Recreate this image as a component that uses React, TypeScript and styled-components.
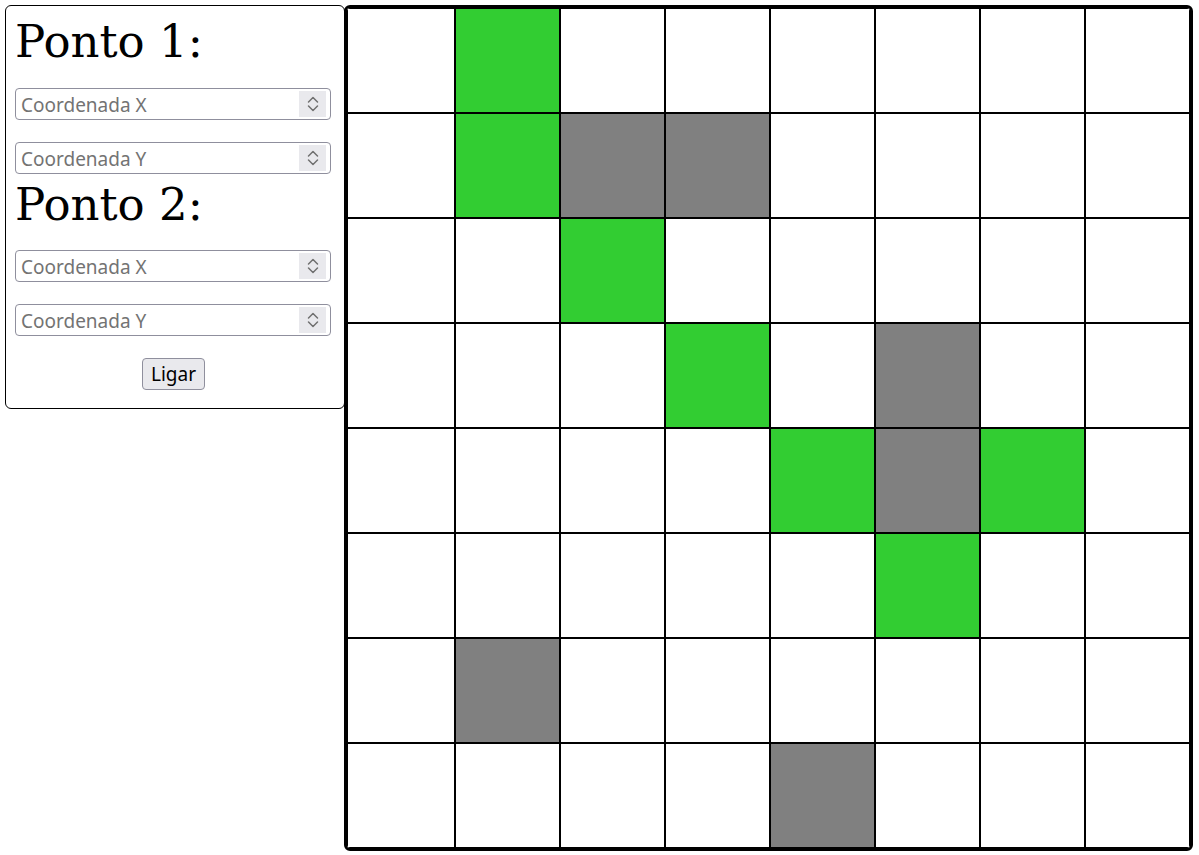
import styled, { createGlobalStyle } from 'styled-components';
import { useState } from 'react';

const GlobalStyle = createGlobalStyle`
    body {
        margin: 0;
        background: #fff;
        font-family: "DejaVu Serif", serif;
    }
`;

const Page = styled.div`
    display: flex;
    align-items: flex-start;
    padding: 5px;
    `;

const Panel = styled.form`
    width: 340px;
    box-sizing: border-box;
    border: 1px solid #000;
    border-radius: 6px;
    padding: 10px 12px 18px 9px;
    display: flex;
    flex-direction: column;
    `;

const Title = styled.h1<{ $gap: number }>`
    margin: ${p => p.$gap}px 0 0 0;
    font-family: "DejaVu Serif", serif;
    font-weight: 400;
    font-size: 45px;
    line-height: 52px;
    height: 52px;
    color: #000;
    `;

const Field = styled.label<{ $gap: number }>`
    margin-top: ${p => p.$gap}px;
    width: 316px;
    height: 32px;
    box-sizing: border-box;
    border: 1px solid #8f8f9d;
    border-radius: 4px;
    display: flex;
    align-items: center;
    padding: 2px 4px 2px 5px;
    background: #fff;
    `;

const Input = styled.input`
    flex: 1;
    min-width: 0;
    border: none;
    outline: none;
    padding: 2px 0 0 0;
    font-family: "Noto Sans", sans-serif;
    font-size: 19px;
    color: #000;
    background: transparent;
    &::placeholder { color: #737373; }
    &::-webkit-inner-spin-button,
    &::-webkit-outer-spin-button { -webkit-appearance: none; margin: 0; }
    -moz-appearance: textfield;
    `;

const Spinner = styled.span`
    width: 27px;
    height: 26px;
    background: #e9e9ed;
    display: flex;
    align-items: center;
    justify-content: center;
    `;

const Button = styled.button`
    align-self: center;
    margin-top: 22px;
    height: 32px;
    padding: 0 8px;
    border: 1px solid #8f8f9d;
    border-radius: 4px;
    background: #e9e9ed;
    font-family: "Noto Sans", sans-serif;
    font-size: 19px;
    color: #000;
    cursor: pointer;
    &:hover { background: #d0d0d7; }
    `;

// first column is a bit wider than the rest in the original
const Board = styled.div`
    margin-left: -1px;
    border: 3px solid #000;
    border-radius: 6px;
    display: grid;
    grid-template-columns: 108px repeat(7, 105px);
    grid-template-rows: repeat(8, 105px);
    overflow: hidden;
    `;

const Cell = styled.div<{ $kind: string }>`
    box-sizing: border-box;
    border: 1px solid #000;
    background: ${p => p.$kind === 'g' ? '#32cd32' : p.$kind === 'x' ? '#808080' : '#fff'};
    `;

const layout = [
    '.g......',
    '.gxx....',
    '..g.....',
    '...g.x..',
    '....gxg.',
    '.....g..',
    '.x......',
    '....x...',
];

function Chevrons() {
    return (
        <svg width="12" height="16" viewBox="0 0 12 16" fill="none" stroke="#707070" strokeWidth="1.5" strokeLinecap="round" strokeLinejoin="round">
            <path d="M1.5 6 L6 1.5 L10.5 6" />
            <path d="M1.5 10 L6 14.5 L10.5 10" />
        </svg>
    );
}

function CoordInput({ placeholder, gap }: { placeholder: string; gap: number }) {
    const [value, setValue] = useState("");
    return (
        <Field $gap={gap}>
            <Input type="number" placeholder={placeholder} value={value} onChange={e => setValue(e.target.value)} />
            <Spinner><Chevrons /></Spinner>
        </Field>
    );
}

export default function App() {
    return (
        <Page>
            <GlobalStyle />
            <Panel onSubmit={e => e.preventDefault()}>
                <Title $gap={0}>Ponto 1:</Title>
                <CoordInput placeholder="Coordenada X" gap={20} />
                <CoordInput placeholder="Coordenada Y" gap={22} />
                <Title $gap={5}>Ponto 2:</Title>
                <CoordInput placeholder="Coordenada X" gap={19} />
                <CoordInput placeholder="Coordenada Y" gap={22} />
                <Button type="submit">Ligar</Button>
            </Panel>
            <Board>
                {layout.flatMap((row, r) =>
                    row.split('').map((k, c) => <Cell key={`${r}-${c}`} $kind={k} />)
                )}
            </Board>
        </Page>
    );
}
